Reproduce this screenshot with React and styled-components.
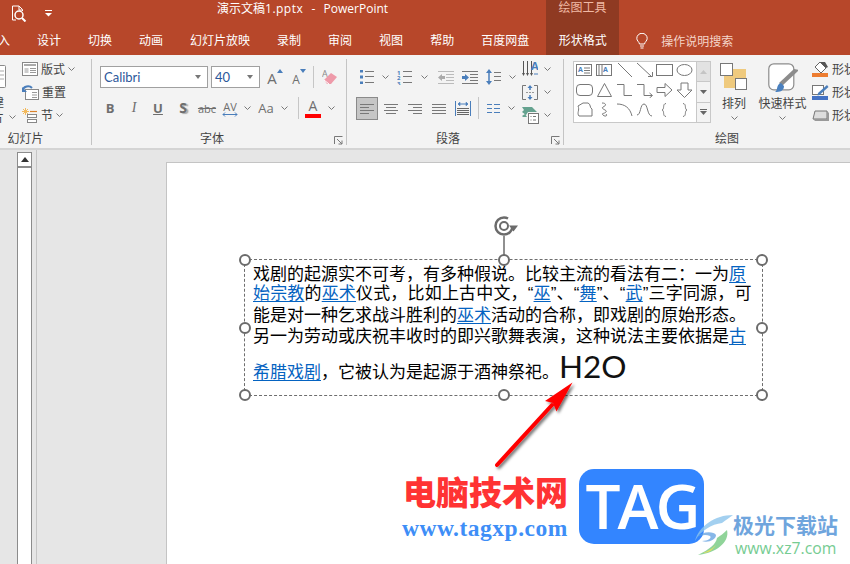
import React from "react";
import styled, { createGlobalStyle } from "styled-components";

const CJK = '"Liberation Sans", "Noto Sans CJK SC", sans-serif';
const UI = '"Open Sans", "Noto Sans CJK SC", sans-serif';
const G = "#787878";
const BL = "#4a7ebb";

const Global = createGlobalStyle`
  html, body { margin: 0; padding: 0; background: #e6e6e6; }
  #root { width: 850px; height: 564px; }
  * { box-sizing: border-box; }
`;

const Page = styled.div`
  position: relative; width: 850px; height: 564px; overflow: hidden;
  display: flex; flex-direction: column; font-family: ${UI}; font-size: 12px; color: #444;
`;
const TitleBar = styled.div`
  height: 27px; background: #b7472a; color: #fff; display: flex; flex: none;
`;
const TitleLeft = styled.div`
  width: 546px; display: flex; align-items: center; padding-left: 11px;
`;
const QuickGap = styled.div`width: 18px;`;
const DocTitle = styled.div`
  margin-left: 165px; white-space: pre; font-size: 12px; line-height: 16px; margin-top: -10px; word-spacing: 1px;
`;
const Ext = styled.span`letter-spacing: 0.5px;`;
const ContextTitle = styled.div`
  width: 73px; background: #8f3a22; color: #f0b9a5; text-align: center; font-size: 12px; line-height: 16px;
`;
const TabBar = styled.div`
  height: 28px; background: #b7472a; display: flex; align-items: stretch; flex: none;
`;
const Tab = styled.div`
  padding: 0 13.5px; color: #fff; font-size: 12px; line-height: 27px; white-space: nowrap;
  &:first-child { margin-left: -15.5px; }
`;
const ContextTab = styled.div`
  margin-left: 3.5px; width: 73px; background: #8f3a22; color: #fff; font-size: 12px; line-height: 27px; text-align: center;
`;
const Search = styled.div`
  margin-left: 17px; display: flex; align-items: center; gap: 13px; color: #f4d5c9; font-size: 12px; height: 27px;
`;

const Ribbon = styled.div`
  height: 93px; flex: none; background: #f3f3f3; display: flex; align-items: stretch;
`;
const Group = styled.div`
  position: relative; flex: none; width: ${p => p.$w}px; margin-left: ${p => p.$ml || 0}px;
  display: flex; flex-direction: column;
  &::after {
    content: ""; position: absolute; right: 0; top: 4px; bottom: 3px; width: 1px; background: #c4c4c4;
    display: ${p => (p.$noSep ? "none" : "block")};
  }
`;
const GroupBody = styled.div`
  flex: 1; display: flex; padding-left: ${p => p.$pl || 0}px; min-height: 0;
`;
const GroupLabel = styled.div`
  height: 20px; line-height: 22px; text-align: center; font-size: 12px; color: #444; flex: none;
  padding-right: ${p => (p.$launcher ? 15 : 0)}px;
`;
const Launcher = styled.svg`
  position: absolute; right: 4px; bottom: 3px; width: 9px; height: 9px;
`;
const Stack = styled.div`
  padding-top: 2.5px; display: flex; flex-direction: column; margin-left: ${p => p.$ml || 0}px;
`;
const StackRow = styled.div`
  height: 23px; display: flex; align-items: center; gap: ${p => p.$gap ?? 3}px; white-space: nowrap; color: #444; font-size: 12px;
`;
const NewSlide = styled.div`
  width: 22px; padding-top: 10px; display: flex; flex-direction: column;
`;
const CutDocBox = styled.div`
  margin-left: -16px; height: 23px; margin-bottom: 6px; flex: none;
`;
const NewSlideLine = styled.div`
  display: flex; align-items: center; height: 15px; font-size: 12px; color: #444; white-space: nowrap;
`;
const NewSlideText = styled.span`
  width: 64px; margin-left: -60px; text-align: right; margin-right: 5px; flex: none;
`;
const Rows = styled.div`
  padding-top: 11px; display: flex; flex-direction: column; gap: 9px;
`;
const Row = styled.div`
  display: flex; align-items: center; height: 22px; margin-left: ${p => p.$ml || 0}px;
`;
const Combo = styled.div`
  width: ${p => p.$w}px; height: 22px; background: #fff; border: 1px solid #a0a0a0; margin-right: ${p => p.$mr || 0}px;
  display: flex; align-items: center; justify-content: space-between; padding: 0 6px 0 3px;
  font-family: Lato, sans-serif; font-size: 13px; color: #2b579a; flex: none;
`;
const Caret = styled.i`
  width: 0; height: 0; border-left: 3.5px solid transparent; border-right: 3.5px solid transparent; border-top: 4px solid #777;
`;
const Cell = styled.div`
  width: ${p => p.$w}px; height: 22px; flex: none; display: flex; align-items: center; justify-content: center; position: relative;
`;
const ActiveCell = styled(Cell)`
  height: 23px; background: #c6c6c6; border: 1px solid #8a8a8a;
`;
const VSep = styled.div`
  width: 1px; height: 22px; background: #c6c6c6; flex: none;
`;
const Glyph = styled.span`
  font-family: ${p => p.$font || UI}; font-size: ${p => p.$s || 13}px; font-weight: ${p => p.$b ? 700 : 400};
  font-style: ${p => p.$i ? "italic" : "normal"}; text-decoration: ${p => p.$u ? "underline" : p.$st ? "line-through" : "none"};
  color: ${p => p.$c || "#6e6e6e"}; line-height: 1; text-shadow: ${p => p.$sh ? "2px 1px 1px #aaa" : "none"};
  margin-top: ${p => p.$mt || 0}px;
`;
const Raised = styled.div`
  display: flex; margin-top: -12px;
`;
const FontColor = styled.div`
  display: flex; flex-direction: column; align-items: center; width: 16px; line-height: 13px; margin-top: 1px;
`;
const RedBar = styled.div`
  width: 16px; height: 4px; background: #f00; margin-top: 1px;
`;
const Gallery = styled.div`
  margin-top: 6px; width: 138px; height: 62px; background: #fff; border: 1px solid #c8c8c8; display: flex; flex: none;
`;
const ShapeGrid = styled.div`
  width: 123px; padding: 0 0 0 1px; display: grid; grid-template-columns: repeat(6, 20px); grid-auto-rows: 20px; align-items: center; justify-items: center;
`;
const ScrollCol = styled.div`
  width: 14px; border-left: 1px solid #c8c8c8; display: flex; flex-direction: column;
`;
const ScrollBtn = styled.div`
  flex: 1; background: ${p => p.$dim ? "#e2e2e2" : "#f3f3f3"}; display: flex; align-items: center; justify-content: center;
  & + & { border-top: 1px solid #c8c8c8; }
`;
const BigBtn = styled.div`
  width: ${p => p.$w}px; flex: none; padding-top: 8px; display: flex; flex-direction: column; align-items: center; font-size: 12px; color: #444;
`;
const BigIcon = styled.div`
  height: 32px; display: flex; justify-content: center;
`;
const BigLabel = styled.div`
  height: 18px; line-height: 18px; white-space: nowrap;
`;
const BigChevron = styled.div`
  height: 10px; display: flex; align-items: center;
`;

const Workspace = styled.div`
  flex: 1; min-height: 0; background: #e6e6e6; border-top: 2px solid #d4d4d4; display: flex;
`;
const Pane = styled.div`
  width: 37px; flex: none; border-right: 1px solid #c6c6c6; padding: 2px 0 0 17px;
`;
const Track = styled.div`
  width: 15px; height: 100%; background: #fff; border: 1px solid #8c8c8c; border-bottom: 0;
`;
const TrackUp = styled.div`
  height: 15px; border-bottom: 2px solid #8c8c8c; display: flex; align-items: center; justify-content: center;
`;
const Canvas = styled.div`
  flex: 1; padding: 12px 0 0 129px; display: flex; min-width: 0;
`;
const Slide = styled.div`
  flex: 1; position: relative; background: #fff; border: 1px solid #c4c4c4; border-right: 0; border-bottom: 0;
`;
const TextBox = styled.div`
  position: absolute; left: 77px; top: 96px; width: 519px; height: 137px; border: 1px dashed #6e6e6e;
  padding: 4px 0 0 8px; font-family: ${CJK}; font-size: 17px; color: #000; line-height: 21px;
`;
const Line = styled.div`
  white-space: nowrap; height: ${p => p.$h || 21}px; letter-spacing: ${p => p.$ls || 0}px;
`;
const LastLine = styled(Line)`
  height: 40px; line-height: 40px; margin-top: -1px;
`;
const Link = styled.span`
  color: #0563c1; text-decoration: underline; text-underline-offset: 2px; text-decoration-thickness: 1px;
`;
const H2O = styled.span`
  font-family: Lato, "Liberation Sans", sans-serif; font-size: 31.5px; color: #111;
`;
const Handle = styled.div`
  position: absolute; width: 12px; height: 12px; border-radius: 50%; background: #fff; border: 2px solid #6b6b6b;
  left: calc(${p => p.$x}% - 6px); top: calc(${p => p.$y}% - 6px);
`;
const Rotator = styled.svg`
  position: absolute; left: 246px; top: -44px; width: 30px; height: 44px;
`;
const Overlay = styled.svg`
  position: absolute; left: 0; top: 0; width: 850px; height: 564px; pointer-events: none;
`;
const BrandCN = styled.div`
  position: absolute; left: 403px; top: 472px; font-family: "Noto Sans CJK SC", sans-serif; font-weight: 900; font-size: 33px; line-height: 38px; color: #f33; white-space: nowrap;
`;
const BrandUrl = styled.div`
  position: absolute; left: 402px; top: 515px; font-family: "Liberation Serif", serif; font-weight: 700; font-size: 23.5px; line-height: 26px; color: #3e8ef7; white-space: nowrap; letter-spacing: 0.5px;
`;
const TagBox = styled.div`
  position: absolute; left: 579px; top: 469px; width: 125px; height: 75px; border-radius: 15px; background: #3385ff;
  color: #fff; font-family: "Open Sans", sans-serif; font-weight: 600; font-size: 62px; line-height: 72px; text-align: center; letter-spacing: -3px;
`;
const XZName = styled.div`
  position: absolute; left: 733px; top: 510px; font-family: "Noto Sans CJK SC", sans-serif; font-weight: 700; font-size: 21px; line-height: 28px; color: #6fa5dd; white-space: nowrap;
`;
const XZUrl = styled.div`
  position: absolute; left: 735px; top: 539px; font-family: "Open Sans", sans-serif; font-size: 15.8px; line-height: 18px; color: #76cc92; white-space: nowrap;
`;

const Svg = ({ w, h, children }) => (
  <svg width={w} height={h} viewBox={`0 0 ${w} ${h}`} fill="none" stroke={G} strokeWidth="1">{children}</svg>
);
const Chev = () => <Svg w={7} h={4}><path d="M.5.5 3.5 3.5 6.5.5" /></Svg>;

const PreviewIcon = () => (
  <Svg w={16} h={17}>
    <path d="M5 15H1.500V1H8l3.500 3.500V6M8 1v4h3.500" stroke="#fff" />
    <circle cx="8" cy="10" r="4" stroke="#fff" strokeWidth="1.500" />
    <path d="M11 13l3.500 3.500" stroke="#fff" strokeWidth="2" />
  </Svg>
);
const QuickIcon = () => (
  <Svg w={7} h={7}><path d="M0 .5h7" stroke="#fff" /><path d="M0 3h7L3.500 6.500z" fill="#fff" stroke="none" /></Svg>
);
const Bulb = () => (
  <Svg w={12} h={16}>
    <path d="M3.500 11C3 8.500.8 8 .8 5.300a5.200 5 0 0 1 10.400 0C11.200 8 9 8.500 8.500 11z" stroke="#fff" />
    <path d="M4 13h4M4.500 15h3" stroke="#fff" />
  </Svg>
);
const LayoutIcon = () => (
  <Svg w={16} h={14}>
    <rect x=".5" y=".5" width="15" height="13" fill="#fff" stroke="#888" />
    <path d="M2 3h12" stroke="#aaa" strokeWidth="2" /><rect x="2.500" y="6" width="4" height="5" fill="#ccc" stroke="none" />
    <path d="M8 6.500h6M8 8.500h6M8 10.500h6" stroke="#999" />
  </Svg>
);
const ResetIcon = () => (
  <Svg w={17} h={15}>
    <rect x="3.500" y="4.500" width="13" height="10" fill="#fff" stroke="#888" />
    <path d="M10 7.500h5M10 10h5M10 12.500h5" stroke="#999" />
    <path d="M1 5a5 4 0 0 1 9-2" stroke={BL} strokeWidth="2" /><path d="M0 2v5h5z" fill={BL} stroke="none" />
  </Svg>
);
const SectionIcon = () => (
  <Svg w={16} h={15}>
    <circle cx="3.500" cy="3.500" r="1.800" fill="#f2b85a" stroke="none" />
    <path d="M3.500 0v7M0 3.500h7M1 1l5 5M6 1 1 6" stroke="#f2b85a" />
    <path d="M8 3.500h7" stroke="#d9822b" strokeWidth="1.200" />
    <rect x="5.500" y="6.500" width="9" height="3" fill="#fff" stroke="#888" />
    <rect x="5.500" y="11.500" width="9" height="3" fill="#fff" stroke="#888" />
  </Svg>
);
const CutDoc = () => (
  <Svg w={22} h={23}>
    <rect x=".5" y=".5" width="21" height="22" rx="1" fill="#fff" stroke="#8a8a8a" />
    <path d="M16 6h4M16 10h4M16 14h4" stroke="#aaa" />
  </Svg>
);
const GrowA = ({ up }) => (
  <Cell $w={24}>
    <Glyph $s={up ? 15 : 12} $mt={up ? 3 : 5}>A</Glyph>
    <Raised><Svg w={6} h={4}><path d={up ? "M0 4h6L3 0z" : "M0 0h6L3 4z"} fill={BL} stroke="none" /></Svg></Raised>
  </Cell>
);
const Eraser = () => (
  <Svg w={16} h={16}>
    <text x="0" y="8" fontSize="9" fill="#888" stroke="none" fontFamily="Open Sans">A</text>
    <path d="M2 11 9 4l6 4-6 7H5z" fill="#ee9aa9" stroke="none" />
    <path d="M2 11l5 4" stroke="#fff" />
  </Svg>
);
const Lines = ({ x = 0, w = 14, ys, c = G }) => (
  <>{ys.map((y, i) => { const it = Array.isArray(y) ? y : [y, x, w]; return <path key={i} d={`M${it[1]} ${it[0]}.5h${it[2]}`} stroke={c} />; })}</>
);
const Bullets = () => (
  <Svg w={14} h={14}>
    {[1, 7, 13].map(y => <rect key={y} x="0" y={y - 1.5} width="3" height="3" fill={BL} stroke="none" />)}
    <Lines x={5} w={9} ys={[1, 6, 12]} />
  </Svg>
);
const Numbers = () => (
  <Svg w={15} h={15}>
    {[1, 2, 3].map((n, i) => <text key={n} x="0" y={4.5 + i * 5.5} fontSize="6" fontWeight="700" fill={BL} stroke="none" fontFamily="Open Sans">{n}</text>)}
    <Lines x={6} w={9} ys={[1, 6, 12]} />
  </Svg>
);
const Indent = ({ out }) => (
  <Svg w={16} h={13}>
    <Lines x={0} w={16} ys={[0, 12]} c={out ? "#bbb" : G} />
    <Lines x={8} w={8} ys={[3, 6, 9]} c={out ? "#bbb" : G} />
    <path d={out ? "M0 6.500 4 3v2h3v3H4v2z" : "M7 6.500 3 3v2H0v3h3v2z"} fill={out ? "#aaa" : BL} stroke="none" />
  </Svg>
);
const LineSpacing = () => (
  <Svg w={15} h={16}>
    <path d="M3 2v12" stroke={BL} strokeWidth="1.500" /><path d="M0 4l3-4 3 4zM0 12l3 4 3-4z" fill={BL} stroke="none" />
    <Lines x={8} w={7} ys={[3, 7, 11]} />
  </Svg>
);
const TextDir = () => (
  <Svg w={16} h={17}>
    <path d="M1.500 0v13M5.500 0v13M9.500 0v13" stroke="#555" />
    <path d="M0 12l1.500 3 1.500-3zM4 12l1.500 3 1.500-3zM8 12l1.500 3 1.500-3z" fill="#555" stroke="none" />
    <text x="9" y="9" fontSize="11" fontWeight="700" fill={BL} stroke="none" fontFamily="Open Sans">A</text>
    <path d="M12 13h4" stroke={BL} />
  </Svg>
);
const AlignText = () => (
  <Svg w={16} h={15}>
    <path d="M4 .5H.5v14H4M12 .5h3.500v14H12" stroke="#777" />
    <path d="M4 7.500h8" stroke="#999" strokeDasharray="2 1" />
    <path d="M8 1v4M8 10v4" stroke={BL} strokeWidth="1.500" /><path d="M5.500 3 8 0l2.500 3zM5.500 12 8 15l2.500-3z" fill={BL} stroke="none" />
  </Svg>
);
const SmartArt = () => (
  <Svg w={17} h={17}>
    <path d="M0 0h10l5 5H6l-2 3-4-3 2-2zM0 9l3-2 2 3H1z" fill="#65a28f" stroke="none" />
    <rect x="6.500" y="6.500" width="10" height="10" fill="#fff" stroke="#777" />
    <path d="M8.500 9.500h1M11 9.500h3M8.500 13h1M11 13h3" stroke="#777" />
  </Svg>
);
const Align = ({ mode }) => {
  const defs = {
    left: [[1, 0, 14], [4, 0, 9], [7, 0, 14], [10, 0, 9]],
    center: [[1, 0, 14], [4, 2, 10], [7, 0, 14], [10, 2, 10]],
    right: [[1, 0, 14], [4, 5, 9], [7, 0, 14], [10, 5, 9]],
    just: [[1, 0, 14], [4, 0, 14], [7, 0, 14], [10, 0, 14]],
  };
  return <Svg w={14} h={11}><Lines ys={defs[mode]} /></Svg>;
};
const Distributed = () => (
  <Svg w={16} h={15}>
    <path d="M.5 0v15M15.500 0v15" stroke={BL} />
    <path d="M3 3h10" stroke={BL} /><path d="M3 3l2-2v4zM13 3l-2-2v4z" fill={BL} stroke={BL} strokeWidth=".5" />
    <Lines x={2} w={12} ys={[7, 9, 11, 13]} c="#666" />
  </Svg>
);
const Columns = () => (
  <Svg w={13} h={9}>
    <Lines x={0} w={5} ys={[0, 4, 8]} c={BL} /><Lines x={7} w={6} ys={[0, 4, 8]} c={BL} />
  </Svg>
);

const S = ({ children }) => <Svg w={18} h={16}>{children}</Svg>;
const shapes = [
  <S><rect x=".5" y="2.500" width="15" height="11" /><text x="2" y="10" fontSize="7" fontWeight="700" fill={BL} stroke="none" fontFamily="Open Sans">A</text><path d="M8 6h6M8 8.500h6M8 11h6" /></S>,
  <S><rect x=".5" y="2.500" width="15" height="11" /><path d="M3 3v10M6 3v10" /><text x="7" y="10" fontSize="7" fontWeight="700" fill={BL} stroke="none" fontFamily="Open Sans">A</text></S>,
  <S><path d="M2 1l14 14" /></S>,
  <S><path d="M1 1l15 14M12 14.500h4.500V10" /></S>,
  <S><rect x=".5" y="2.500" width="16" height="11" /></S>,
  <S><ellipse cx="8.500" cy="8" rx="7.500" ry="5.500" /></S>,
  <S><rect x=".5" y="2.500" width="16" height="11" rx="3.500" /></S>,
  <S><path d="M8.500 1.500 15.500 14.500h-14z" /></S>,
  <S><path d="M1 2.500h7v11h8" /></S>,
  <S><path d="M1 2.500h7v11h8M13.500 11l3 2.500-3 2.500" /></S>,
  <S><path d="M1 5.500h8V1.500l7 6.500-7 6.500v-4H1z" /></S>,
  <S><path d="M5 1h7v7h4l-7.500 7.500L1 8h4z" /></S>,
  <S><path d="M2 4 7 1h5c3 1 1.500 5 4 6v7H3C.5 11 4 8 2 4z" /></S>,
  <S><path d="M6 1c5 0 4 3 1 4-3 2 5 3 3 5s-5 1-3 3 5 1 3-1" /></S>,
  <S><path d="M1 2c8 0 13 4 15 12" /></S>,
  <S><path d="M1 13C5 13 4 2 8 2s3 12 8 12" /></S>,
  <S><path d="M10 1.500C6 2 9 7 6 8c3 1 0 6 4 6.500" /></S>,
  <S><path d="M7 1.500c4 .5 1 5.500 4 6.500-3 1 0 6-4 6.500" /></S>,
];

const Arrange = () => (
  <svg width="28" height="28" viewBox="0 0 28 28">
    <rect x="4" y="6" width="22" height="19" fill="#efca7e" />
    <rect x=".5" y=".5" width="12" height="12" fill="#fff" stroke="#777" />
    <rect x="15.500" y="15.500" width="11" height="11" fill="#fff" stroke="#777" />
  </svg>
);
const QuickStyle = () => (
  <svg width="30" height="30" viewBox="0 0 30 30" fill="none">
    <rect x=".8" y=".8" width="25" height="26" rx="5" fill="#fff" stroke="#8c8c8c" strokeWidth="1.200" />
    <path d="M31 7 14 23l-3-3L26 6z" fill="#8c8c8c" />
    <path d="M7 29c3-1 1-8 6-9l3 3c0 5-4 6-9 6z" fill="#4a80bf" />
  </svg>
);
const Fill = () => (
  <Svg w={17} h={16}>
    <path d="M3 6l5-5 6 6-5 5z" fill="#fff" stroke="#666" />
    <path d="M8 1l6 6 2-1-3-5z" fill="#555" stroke="none" />
    <rect x="0" y="12" width="16" height="4" fill="#ed7d31" stroke="none" />
  </Svg>
);
const Outline = () => (
  <Svg w={17} h={16}>
    <rect x=".5" y="1.500" width="11" height="9" fill="#fff" stroke="#777" />
    <path d="M6 9l9-8 1.500 2-9 8-2 .5z" fill={BL} stroke="none" />
    <rect x="0" y="12" width="16" height="4" fill="#4472c4" stroke="none" />
  </Svg>
);
const Effect = () => (
  <Svg w={17} h={14}>
    <path d="M3 3h12v8H1z" fill="#ddd" stroke="#777" />
    <path d="M15 3l2 2v8l-2-2zM1 11l14 0 2 2H3z" fill="#999" stroke="none" />
  </Svg>
);
const LauncherIcon = () => (
  <Launcher viewBox="0 0 9 9" fill="none" stroke={G}><path d="M.5 8V.5H8.500M3 3l5 5M8 4.500V8H4.500" /></Launcher>
);

export default function App() {
  return (
    <Page>
      <Global />
      <TitleBar>
        <TitleLeft>
          <PreviewIcon />
          <QuickGap />
          <QuickIcon />
          <DocTitle>演示文稿<Ext>1.pptx</Ext>  -  PowerPoint</DocTitle>
        </TitleLeft>
        <ContextTitle>绘图工具</ContextTitle>
      </TitleBar>
      <TabBar>
        {["入", "设计", "切换", "动画", "幻灯片放映", "录制", "审阅", "视图", "帮助", "百度网盘"].map(t => <Tab key={t}>{t}</Tab>)}
        <ContextTab>形状格式</ContextTab>
        <Search><Bulb />操作说明搜索</Search>
      </TabBar>

      <Ribbon>
        <Group $w={133} $ml={-41}>
          <GroupBody $pl={41}>
            <NewSlide>
              <CutDocBox><CutDoc /></CutDocBox>
              <NewSlideLine><NewSlideText>新建</NewSlideText></NewSlideLine>
              <NewSlideLine><NewSlideText>幻灯片</NewSlideText><Chev /></NewSlideLine>
            </NewSlide>
            <Stack>
              <StackRow><LayoutIcon />版式 <Chev /></StackRow>
              <StackRow><ResetIcon />重置</StackRow>
              <StackRow><SectionIcon />节 <Chev /></StackRow>
            </Stack>
          </GroupBody>
          <GroupLabel>幻灯片</GroupLabel>
        </Group>

        <Group $w={255}>
          <GroupBody>
            <Rows>
              <Row $ml={8}>
                <Combo $w={108} $mr={3}>Calibri<Caret /></Combo>
                <Combo $w={49}>40<Caret /></Combo>
                <Cell $w={3} />
                <GrowA up />
                <GrowA />
                <Cell $w={2} />
                <VSep />
                <Cell $w={31}><Eraser /></Cell>
              </Row>
              <Row $ml={6}>
                <Cell $w={24}><Glyph $b>B</Glyph></Cell>
                <Cell $w={24}><Glyph $i $font="Liberation Serif" $s={14}>I</Glyph></Cell>
                <Cell $w={24}><Glyph $u $b>U</Glyph></Cell>
                <Cell $w={26}><Glyph $b $sh $s={14}>S</Glyph></Cell>
                <Cell $w={22}><Glyph $st $s={11}>abc</Glyph></Cell>
                <Cell $w={24}>
                  <FontColor>
                    <Glyph $s={11}>AV</Glyph>
                    <Svg w={16} h={5}><path d="M1 2.500h14M3 .5l-2 2 2 2M13 .5l2 2-2 2" stroke={BL} /></Svg>
                  </FontColor>
                </Cell>
                <Cell $w={10}><Chev /></Cell>
                <Cell $w={28}><Glyph $s={13}>Aa</Glyph></Cell>
                <Cell $w={8}><Chev /></Cell>
                <Cell $w={10} />
                <VSep />
                <Cell $w={28}>
                  <FontColor><Glyph $s={14}>A</Glyph><RedBar /></FontColor>
                </Cell>
                <Cell $w={8}><Chev /></Cell>
              </Row>
            </Rows>
          </GroupBody>
          <GroupLabel $launcher>字体</GroupLabel>
          <LauncherIcon />
        </Group>

        <Group $w={217}>
          <GroupBody $pl={7}>
            <Rows>
              <Row>
                <Cell $w={25}><Bullets /></Cell>
                <Cell $w={12}><Chev /></Cell>
                <Cell $w={27}><Numbers /></Cell>
                <Cell $w={12}><Chev /></Cell>
                <Cell $w={32}><Indent out /></Cell>
                <Cell $w={16}><Indent /></Cell>
                <Cell $w={30}><LineSpacing /></Cell>
                <Cell $w={8}><Chev /></Cell>
              </Row>
              <Row $ml={2}>
                <ActiveCell $w={22}><Align mode="left" /></ActiveCell>
                <Cell $w={26}><Align mode="center" /></Cell>
                <Cell $w={22}><Align mode="right" /></Cell>
                <Cell $w={26}><Align mode="just" /></Cell>
                <Cell $w={22}><Distributed /></Cell>
                <Cell $w={4} />
                <VSep />
                <Cell $w={28}><Columns /></Cell>
                <Cell $w={8}><Chev /></Cell>
              </Row>
            </Rows>
            <Stack $ml={6}>
              <StackRow $gap={6}><TextDir /><Chev /></StackRow>
              <StackRow $gap={6}><AlignText /><Chev /></StackRow>
              <StackRow $gap={5}><SmartArt /><Chev /></StackRow>
            </Stack>
          </GroupBody>
          <GroupLabel $launcher>段落</GroupLabel>
          <LauncherIcon />
        </Group>

        <Group $w={341} $noSep>
          <GroupBody $pl={9}>
            <Gallery>
              <ShapeGrid>{shapes.map((s, i) => <div key={i}>{s}</div>)}</ShapeGrid>
              <ScrollCol>
                <ScrollBtn $dim><Svg w={7} h={4}><path d="M0 4h7L3.500 0z" fill="#c4c4c4" stroke="none" /></Svg></ScrollBtn>
                <ScrollBtn><Svg w={7} h={4}><path d="M0 0h7L3.500 4z" fill="#666" stroke="none" /></Svg></ScrollBtn>
                <ScrollBtn><Svg w={7} h={6}><path d="M0 .5h7" stroke="#666" /><path d="M0 2h7L3.500 6z" fill="#666" stroke="none" /></Svg></ScrollBtn>
              </ScrollCol>
            </Gallery>
            <BigBtn $w={46}><BigIcon><Arrange /></BigIcon><BigLabel>排列</BigLabel><BigChevron><Chev /></BigChevron></BigBtn>
            <BigBtn $w={51}><BigIcon><QuickStyle /></BigIcon><BigLabel>快速样式</BigLabel><BigChevron><Chev /></BigChevron></BigBtn>
            <Stack $ml={4}>
              <StackRow><Fill />形状填充</StackRow>
              <StackRow><Outline />形状轮廓</StackRow>
              <StackRow><Effect />形状效果</StackRow>
            </Stack>
          </GroupBody>
          <GroupLabel $launcher>绘图</GroupLabel>
        </Group>
      </Ribbon>

      <Workspace>
        <Pane>
          <Track>
            <TrackUp><Svg w={8} h={5}><path d="M0 5h8L4 0z" fill="#333" stroke="none" /></Svg></TrackUp>
          </Track>
        </Pane>
        <Canvas>
          <Slide>
            <TextBox>
              <Line $h={19}>戏剧的起源实不可考，有多种假说。比较主流的看法有二：一为<Link>原</Link></Line>
              <Line $h={22} $ls={0.17}><Link>始宗教</Link>的<Link>巫术</Link>仪式，比如上古中文，“<Link>巫</Link>”、“<Link>舞</Link>”、“<Link>武</Link>”三字同源，可</Line>
              <Line>能是对一种乞求战斗胜利的<Link>巫术</Link>活动的合称，即戏剧的原始形态。</Line>
              <Line>另一为劳动或庆祝丰收时的即兴歌舞表演，这种说法主要依据是<Link>古</Link></Line>
              <LastLine><Link>希腊戏剧</Link>，它被认为是起源于酒神祭祀。<H2O>H2O</H2O></LastLine>
              <Rotator viewBox="0 0 30 44" fill="none">
                <path d="M13 44V20" stroke="#6b6b6b" strokeWidth="1.500" />
                <circle cx="13" cy="10" r="8.500" stroke="#6b6b6b" strokeWidth="2.500" strokeDasharray="44 10" />
                <circle cx="13" cy="10" r="4" stroke="#6b6b6b" strokeWidth="2" />
                <path d="M18 9.500h9l-4.500 6z" fill="#6b6b6b" />
              </Rotator>
              {[[0, 0], [50, 0], [100, 0], [0, 50], [100, 50], [0, 100], [50, 100], [100, 100]].map(([x, y]) => (
                <Handle key={`${x}-${y}`} $x={x} $y={y} />
              ))}
            </TextBox>
          </Slide>
        </Canvas>
      </Workspace>

      <BrandCN>电脑技术网</BrandCN>
      <BrandUrl>www.tagxp.com</BrandUrl>
      <TagBox>TAG</TagBox>
      <XZName>极光下载站</XZName>
      <XZUrl>www.xz7.com</XZUrl>
      <Overlay viewBox="0 0 850 564">
        <defs>
          <filter id="arrowShadow" x="-20%" y="-20%" width="150%" height="150%">
            <feDropShadow dx="2" dy="2" stdDeviation="1.500" floodColor="#000" floodOpacity="0.55" />
          </filter>
        </defs>
        <g filter="url(#arrowShadow)">
          <path d="M497 465 552 405" stroke="#f00" strokeWidth="4" strokeLinecap="round" />
          <path d="M572.500 382.500 556.500 411.500 553 403 545 401z" fill="#f00" />
        </g>
        <path d="M733 515C715 515 699 526 695 541 700 531 712 524 722 523 726 520 730 517 733 515z" fill="#8cc4ec" opacity="0.8" />
        <path d="M727 530C730 542 716 553 698 555 710 549 716 544 717 538 720 536 724 533 727 530z" fill="#84cf8e" opacity="0.9" />
        <path d="M703 553C708 551 712 549 716 545 712 551 708 553 703 553z" fill="#e2de60" />
        <path d="M697 537C702 531 714 531 716 535 716 540 708 543 702 541 708 541 712 538 710 536 706 534 701 535 697 537z" fill="#5f9fe0" opacity="0.75" />
      </Overlay>
    </Page>
  );
}
